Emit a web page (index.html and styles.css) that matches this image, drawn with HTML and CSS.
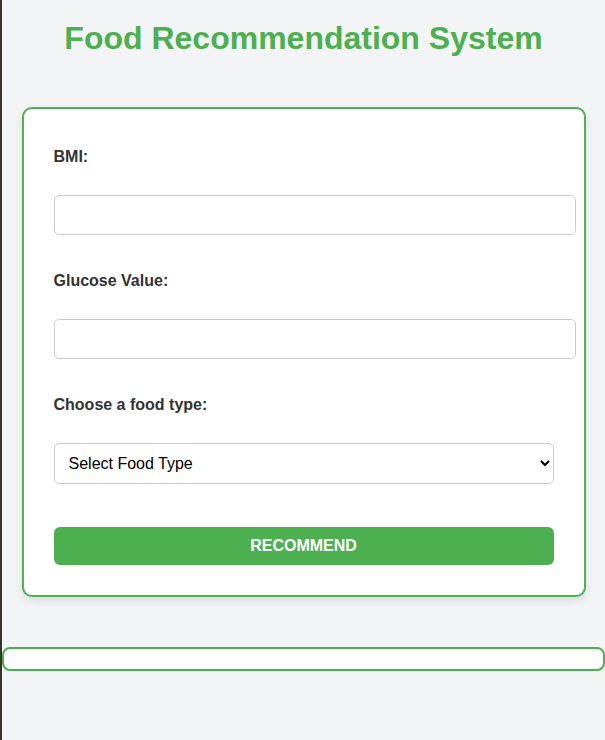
FILE: index.html
```html
<!DOCTYPE html>
<html lang="en">
<head>
<meta charset="utf-8">
<title>Food Recommendation System</title>
<link rel="stylesheet" href="styles.css">
</head>
<body>
  <h1 class="title">Food Recommendation System</h1>
  <div class="card">
    <form class="form">
      <label class="label" for="bmi">BMI:</label>
      <input class="field" type="text" id="bmi">
      <label class="label" for="glucose">Glucose Value:</label>
      <input class="field" type="text" id="glucose">
      <label class="label" for="type">Choose a food type:</label>
      <select class="select" id="type">
        <option>Select Food Type</option>
      </select>
      <button class="btn" type="button">RECOMMEND</button>
    </form>
  </div>
  <div class="result"></div>
</body>
</html>
```

FILE: styles.css
```css
html {
  background: #f3f4f6;
}
body {
  margin: 0;
  min-height: 740px;
  border-left: 2px solid #37312a;
  background: #f3f4f6;
  font-family: "Liberation Sans", Arial, sans-serif;
  color: #333;
}
.title {
  margin: 20px 0 0;
  text-align: center;
  color: #4caf50;
  font-size: 32px;
  line-height: 37px;
  font-weight: bold;
}
.card {
  width: 500px;
  margin: 50px auto 0;
  padding: 30px;
  background: #fff;
  border: 2px solid #4caf50;
  border-radius: 10px;
  box-shadow: 0 4px 10px rgba(0, 0, 0, 0.1);
}
.form {
  display: flex;
  flex-direction: column;
  align-items: flex-start;
}
.label {
  display: block;
  margin: 9px 0 29px;
  font-size: 16px;
  line-height: 18px;
  font-weight: bold;
  color: #333;
}
.field {
  display: block;
  width: 100%;
  height: 18px;
  padding: 10px;
  margin: 0 0 28px;
  border: 1px solid #ccc;
  border-radius: 5px;
  font-size: 16px;
  font-family: "Liberation Sans", Arial, sans-serif;
  background: #fff;
}
.select {
  display: block;
  width: 100%;
  height: 41px;
  padding: 0 10px;
  margin: 0;
  border: 1px solid #ccc;
  border-radius: 5px;
  font-size: 16px;
  font-family: "Liberation Sans", Arial, sans-serif;
  color: #000;
  background: #fff;
}
.btn {
  display: block;
  width: 100%;
  height: 38px;
  margin-top: 43px;
  border: none;
  border-radius: 6px;
  background: #4caf50;
  color: #fff;
  font-size: 16px;
  font-weight: bold;
  font-family: "Liberation Sans", Arial, sans-serif;
}
.result {
  box-sizing: border-box;
  width: 100%;
  height: 24px;
  margin-top: 50px;
  border: 2px solid #4caf50;
  border-radius: 8px;
  background: #fff;
}
```
